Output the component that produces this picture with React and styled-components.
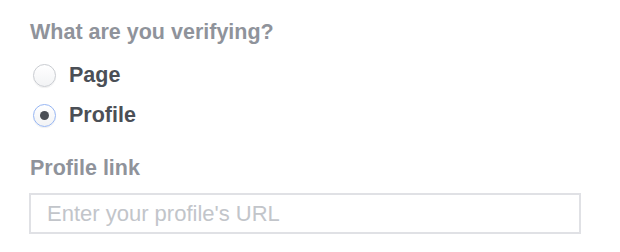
import React, { useState } from 'react';
import styled, { createGlobalStyle } from 'styled-components';

const GlobalStyle = createGlobalStyle`
  body {
    margin: 0;
    background: #ffffff;
    font-family: "Liberation Sans", Arial, Helvetica, sans-serif;
  }
`;

const Form = styled.div`
  display: flex;
  flex-direction: column;
  width: 552px;
  padding: 20px 0 0 29px;
`;

const Heading = styled.div`
  font-size: 21.5px;
  line-height: 24px;
  font-weight: bold;
  color: #8f939b;
  padding-left: 1px;
  margin-bottom: ${(p) => p.$gap || 0}px;
`;

const Options = styled.div`
  display: flex;
  flex-direction: column;
  gap: 10px;
  margin-bottom: 26px;
`;

const Option = styled.label`
  display: flex;
  align-items: center;
  gap: 13px;
  height: 30px;
  padding-left: 4px;
  cursor: pointer;
  font-size: 21.5px;
  line-height: 24px;
  font-weight: bold;
  color: #4b4f56;
`;

const RadioInput = styled.input.attrs({ type: 'radio' })`
  appearance: none;
  margin: 0;
  flex: none;
  width: 23px;
  height: 23px;
  border-radius: 50%;
  border: 1px solid ${(p) => (p.checked ? '#97b6f3' : '#c9ccd1')};
  background: linear-gradient(#ffffff, #f2f3f5);
  box-shadow: 0 1px 1px rgba(0, 0, 0, 0.06);
  display: grid;
  place-items: center;
  outline: none;

  &::after {
    content: '';
    width: 9px;
    height: 9px;
    border-radius: 50%;
    background: #4b4f56;
    display: ${(p) => (p.checked ? 'block' : 'none')};
  }
`;

const TextInput = styled.input`
  box-sizing: border-box;
  width: 552px;
  height: 41px;
  margin: 0;
  padding: 0 14px 0 16px;
  border: 2px solid #e0e1e5;
  border-radius: 0;
  outline: none;
  font-family: "Liberation Sans", Arial, Helvetica, sans-serif;
  font-size: 22px;
  color: #1d2129;

  &::placeholder {
    color: #c2c5ca;
  }
`;

export default function App() {
  const [kind, setKind] = useState('profile');
  const [link, setLink] = useState('');

  return (
    <>
      <GlobalStyle />
      <Form>
        <Heading $gap={16}>What are you verifying?</Heading>
        <Options>
          <Option>
            <RadioInput
              name="kind"
              checked={kind === 'page'}
              onChange={() => setKind('page')}
            />
            Page
          </Option>
          <Option>
            <RadioInput
              name="kind"
              checked={kind === 'profile'}
              onChange={() => setKind('profile')}
            />
            Profile
          </Option>
        </Options>
        <Heading $gap={13}>Profile link</Heading>
        <TextInput
          placeholder="Enter your profile's URL"
          value={link}
          onChange={(e) => setLink(e.target.value)}
        />
      </Form>
    </>
  );
}
